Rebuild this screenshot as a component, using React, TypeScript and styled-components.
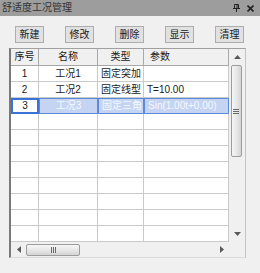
import React from 'react'
import styled, { createGlobalStyle, css } from 'styled-components'

const GlobalStyle = createGlobalStyle`
  html, body {
    margin: 0;
    padding: 0;
    background: #f0f0f0;
  }
  body {
    font-family: 'Liberation Sans', 'Noto Sans CJK SC', sans-serif;
    font-size: 10px;
    color: #1a1a1a;
  }
`

const Window = styled.div`
  width: 260px;
  height: 273px;
  background: #f0f0f0;
  display: flex;
  flex-direction: column;
  overflow: hidden;
`

const TitleBar = styled.div`
  height: 16px;
  background: #9d9d9d;
  display: flex;
  align-items: center;
  justify-content: space-between;
  padding: 0 6px 0 2px;
`

const TitleText = styled.span`
  font-size: 10px;
  color: #333;
  line-height: 16px;
`

const TitleIcons = styled.div`
  display: flex;
  align-items: center;
  gap: 7px;
`

const Toolbar = styled.div`
  height: 17px;
  margin-top: 10px;
  padding: 0 16px 0 15px;
  display: flex;
  justify-content: space-between;
`

const Button = styled.button`
  width: 29px;
  height: 17px;
  padding: 0;
  border: 1px solid #adadad;
  background: #e1e1e1;
  font-family: 'Liberation Sans', 'Noto Sans CJK SC', sans-serif;
  font-size: 10px;
  color: #1a1a1a;
  line-height: 15px;
`

const GridFrame = styled.div`
  margin: 5px 0 0 9px;
  width: 237px;
  height: 210px;
  box-sizing: border-box;
  border-top: 1px solid #a0a0a0;
  border-left: 2px solid #7a7a7a;
  border-right: 1px solid #c4c4c4;
  border-bottom: 1px solid #dcdcdc;
  display: flex;
  flex-direction: column;
`

const Body = styled.div`
  display: flex;
  height: 193px;
`

const Table = styled.div`
  width: 218px;
  background: #fff;
  display: flex;
  flex-direction: column;
`

const Row = styled.div<{ header?: boolean }>`
  display: grid;
  grid-template-columns: 28px 59px 46px 85px;
  height: ${({ header }) => (header ? 17 : 16)}px;
`

const Cell = styled.div<{ align?: 'left' | 'center'; header?: boolean; selected?: boolean; focused?: boolean }>`
  box-sizing: border-box;
  overflow: hidden;
  white-space: nowrap;
  border-right: 1px solid #cacaca;
  border-bottom: 1px solid #cacaca;
  text-align: ${({ align }) => align ?? 'left'};
  padding-left: ${({ align }) => (align === 'center' ? 0 : 3)}px;
  line-height: 15px;
  ${({ header }) =>
    header &&
    css`
      background: #f0f0f0;
      border-color: #a8a8a8;
      line-height: 16px;
    `}
  ${({ selected }) =>
    selected &&
    css`
      background: #c4d4f2;
      color: #f6f8ff;
      border: 1px solid #5b8ad8;
      line-height: 14px;
    `}
  ${({ focused }) =>
    focused &&
    css`
      background: #fff;
      color: #1a1a1a;
      border: 2px solid #3a72d6;
      line-height: 12px;
    `}
`

const VScroll = styled.div`
  width: 16px;
  background: #f0f0f0;
  display: flex;
  flex-direction: column;
  align-items: center;
`

const ArrowBox = styled.div<{ vertical?: boolean }>`
  width: ${({ vertical }) => (vertical ? '16px' : '15px')};
  height: ${({ vertical }) => (vertical ? '16px' : '14px')};
  display: flex;
  align-items: center;
  justify-content: center;
`

const VThumb = styled.div`
  width: 11px;
  height: 92px;
  box-sizing: border-box;
  margin-left: -2px;
  border: 1px solid #9c9c9c;
  border-radius: 2px;
  background: linear-gradient(to right, #f6f6f6, #e6e6e6 55%, #d4d4d4);
  display: flex;
  align-items: center;
  justify-content: center;
`

const VTrack = styled.div`
  flex: 1;
  width: 100%;
  display: flex;
  flex-direction: column;
  align-items: center;
`

const Footer = styled.div`
  display: flex;
  height: 15px;
`

const HScroll = styled.div`
  width: 218px;
  background: #f0f0f0;
  display: flex;
  align-items: center;
`

const HThumb = styled.div`
  width: 54px;
  height: 12px;
  box-sizing: border-box;
  border: 1px solid #9c9c9c;
  border-radius: 2px;
  background: linear-gradient(to bottom, #f6f6f6, #e6e6e6 55%, #d4d4d4);
  display: flex;
  align-items: center;
  justify-content: center;
`

const HTrack = styled.div`
  flex: 1;
  display: flex;
  align-items: center;
`

const Corner = styled.div`
  width: 16px;
  background: #f0f0f0;
`

type Dir = 'up' | 'down' | 'left' | 'right'

function Arrow({ dir }: { dir: Dir }) {
  const pts: Record<Dir, string> = {
    up: '0,4 3.5,0 7,4',
    down: '0,0 7,0 3.5,4',
    left: '4,0 4,7 0,3.5',
    right: '0,0 4,3.5 0,7',
  }
  const v = dir === 'up' || dir === 'down'
  return (
    <svg width={v ? 7 : 4} height={v ? 4 : 7}>
      <polygon points={pts[dir]} fill="#5a5a5a" />
    </svg>
  )
}

function Grip({ vertical }: { vertical?: boolean }) {
  return vertical ? (
    <svg width="6" height="5">
      <path d="M0 0.5H6M0 2.5H6M0 4.5H6" stroke="#6a6a6a" strokeWidth="1" />
    </svg>
  ) : (
    <svg width="5" height="6">
      <path d="M0.5 0V6M2.5 0V6M4.5 0V6" stroke="#6a6a6a" strokeWidth="1" />
    </svg>
  )
}

const rows = [
  { no: '1', name: '工况1', kind: '固定突加', param: '' },
  { no: '2', name: '工况2', kind: '固定线型', param: 'T=10.00' },
  { no: '3', name: '工况3', kind: '固定三角', param: 'Sin(1.00t+0.00)' },
]

const EMPTY_ROWS = 8

export default function App() {
  return (
    <Window>
      <GlobalStyle />
      <TitleBar>
        <TitleText>舒适度工况管理</TitleText>
        <TitleIcons>
          <svg width="7" height="8">
            <path d="M1.5 0.5H5.5V4.5H1.5Z M0 4.5H7 M3.5 4.5V8" stroke="#222" strokeWidth="1" fill="none" />
            <path d="M4 1V4" stroke="#222" strokeWidth="1" />
          </svg>
          <svg width="7" height="7">
            <path d="M0.5 0.5L6.5 6.5M6.5 0.5L0.5 6.5" stroke="#222" strokeWidth="1.6" />
          </svg>
        </TitleIcons>
      </TitleBar>

      <Toolbar>
        <Button>新建</Button>
        <Button>修改</Button>
        <Button>删除</Button>
        <Button>显示</Button>
        <Button>清理</Button>
      </Toolbar>

      <GridFrame>
        <Body>
          <Table>
            <Row header>
              <Cell header align="center">序号</Cell>
              <Cell header align="center">名称</Cell>
              <Cell header align="center">类型</Cell>
              <Cell header style={{ paddingLeft: 6 }}>参数</Cell>
            </Row>
            {rows.map((r, i) => {
              const sel = i === 2
              return (
                <Row key={r.no}>
                  <Cell align="center" focused={sel}>{r.no}</Cell>
                  <Cell align="center" selected={sel}>{r.name}</Cell>
                  <Cell selected={sel}>{r.kind}</Cell>
                  <Cell selected={sel}>{r.param}</Cell>
                </Row>
              )
            })}
            {Array.from({ length: EMPTY_ROWS }).map((_, i) => (
              <Row key={`e${i}`}>
                <Cell />
                <Cell />
                <Cell />
                <Cell />
              </Row>
            ))}
          </Table>
          <VScroll>
            <ArrowBox vertical>
              <Arrow dir="up" />
            </ArrowBox>
            <VTrack>
              <VThumb>
                <Grip vertical />
              </VThumb>
            </VTrack>
            <ArrowBox vertical>
              <Arrow dir="down" />
            </ArrowBox>
          </VScroll>
        </Body>
        <Footer>
          <HScroll>
            <ArrowBox>
              <Arrow dir="left" />
            </ArrowBox>
            <HTrack>
              <HThumb>
                <Grip />
              </HThumb>
            </HTrack>
            <ArrowBox>
              <Arrow dir="right" />
            </ArrowBox>
          </HScroll>
          <Corner />
        </Footer>
      </GridFrame>
    </Window>
  )
}
